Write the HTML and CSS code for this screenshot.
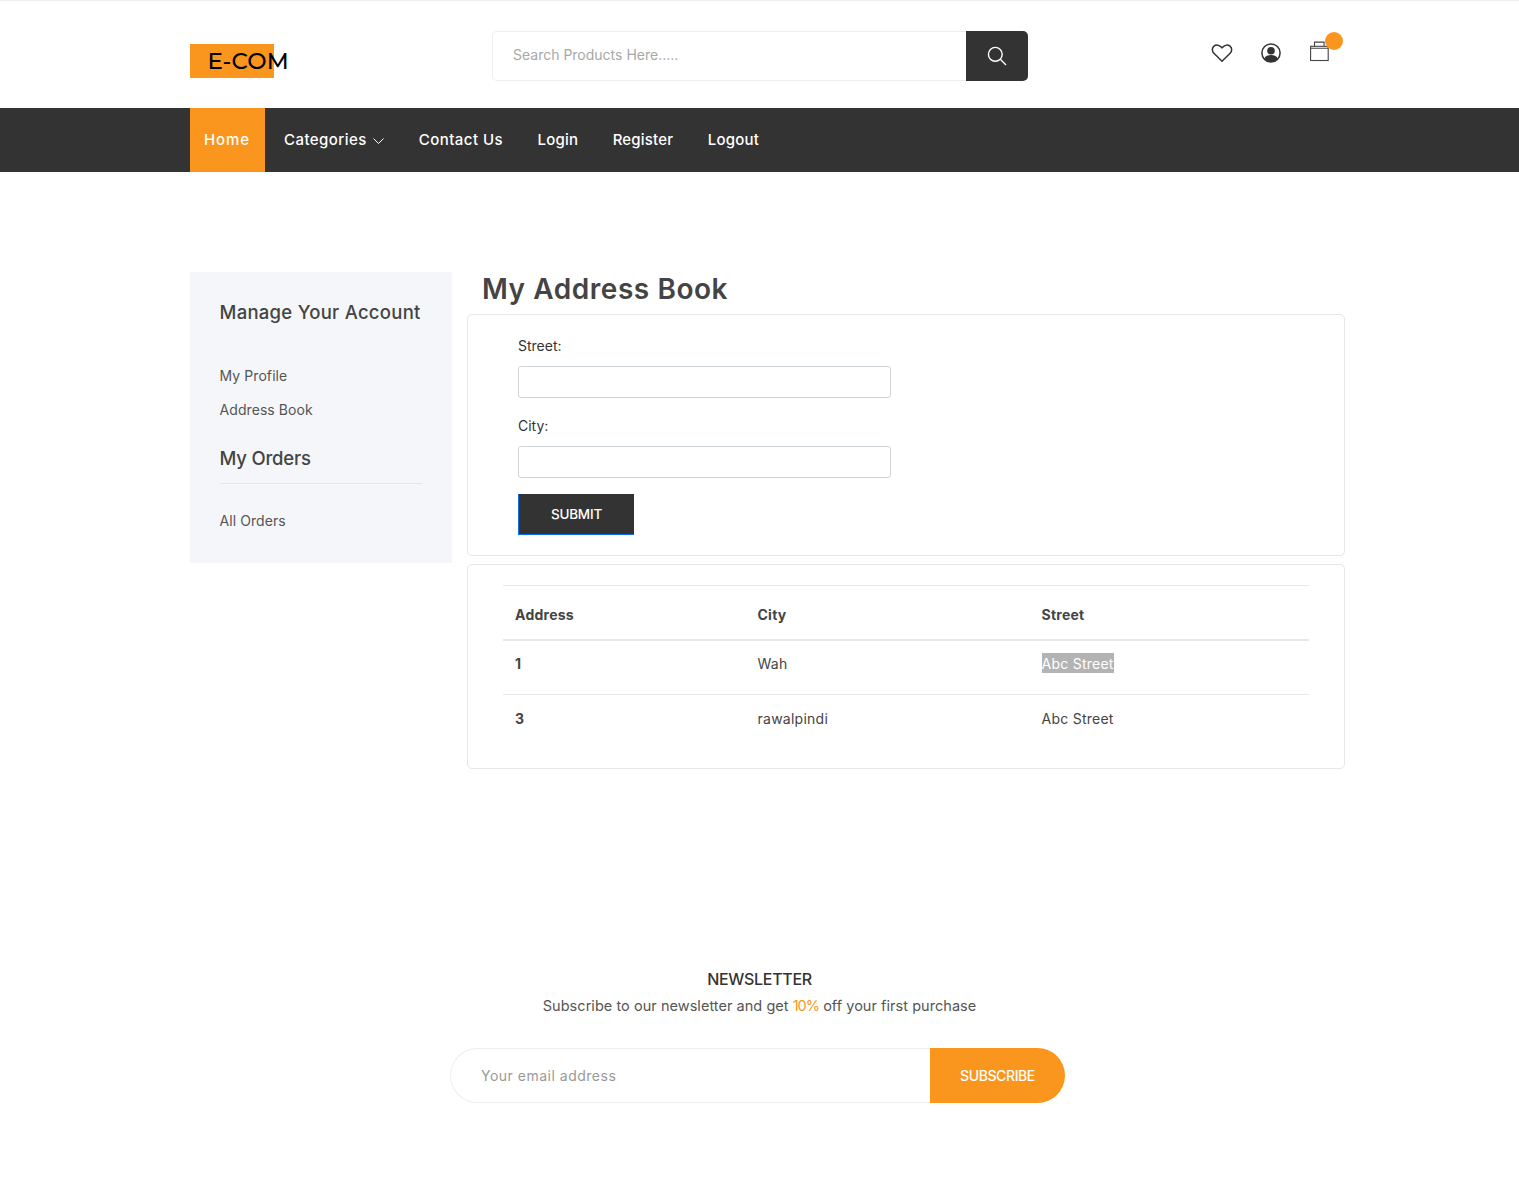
FILE: index.html
```html
<!DOCTYPE html>
<html lang="en">
<head>
<meta charset="utf-8">
<title>My Address Book</title>
<link rel="stylesheet" href="styles.css">
</head>
<body>
<header class="header">
  <div class="logo"><span class="logo-mark">E-COM</span></div>
  <form class="search">
    <div class="search-field">Search Products Here.....</div>
    <button type="button" class="search-btn" aria-label="Search">
      <svg width="20" height="20" viewBox="0 0 20 20" fill="none" stroke="#fff" stroke-width="1.4"><circle cx="8.3" cy="8.3" r="6.9"/><path d="M13.3 13.3l5.700 5.700"/></svg>
    </button>
  </form>
  <div class="header-icons">
    <svg class="icon icon-low" width="22" height="20" viewBox="0 0 22 20" fill="none" stroke="#333" stroke-width="1.5"><path d="M11 18.2 2.900 10.300C.7 8.100.9 4.900 3 3.100 5.100 1.400 8.400 1.700 11 4.800 13.600 1.700 16.900 1.400 19 3.100 21.100 4.900 21.300 8.100 19.100 10.300Z"/></svg>
    <svg class="icon icon-low" width="20" height="20" viewBox="0 0 20 20"><circle cx="10" cy="10" r="9.100" fill="none" stroke="#333" stroke-width="1.500"/><circle cx="10" cy="7.800" r="3.800" fill="#333"/><path d="M3.300 15.500C4.500 12.800 7 12 10 12s5.500.8 6.700 3.500A9 9 0 0 1 10 19a9 9 0 0 1-6.700-3.500Z" fill="#333"/></svg>
    <div class="cart">
      <svg class="icon" width="19" height="21" viewBox="0 0 19 21" fill="none" stroke="#444" stroke-width="1.100"><rect x=".6" y="5.300" width="17.600" height="14.200"/><path d="M.6 7.300h17.600M4.500 5.300V1.100h9.600v4.200"/></svg>
      <span class="cart-badge"></span>
    </div>
  </div>
</header>
<nav class="nav">
  <a class="nav-link nav-active">Home</a>
  <a class="nav-link">Categories
    <svg class="chev" width="11" height="6" viewBox="0 0 11 6" fill="none" stroke="#fff" stroke-width="1"><path d="M.5.500l5 5 5-5"/></svg>
  </a>
  <a class="nav-link">Contact Us</a>
  <a class="nav-link nav-tight">Login</a>
  <a class="nav-link nav-tight">Register</a>
  <a class="nav-link nav-tight">Logout</a>
</nav>
<main class="main">
  <aside class="side">
    <h3 class="side-title">Manage Your Account</h3>
    <ul class="side-list">
      <li>My Profile</li>
      <li>Address Book</li>
    </ul>
    <h3 class="side-sub">My Orders</h3>
    <ul class="side-list side-list-last">
      <li>All Orders</li>
    </ul>
  </aside>
  <section class="content">
    <h2 class="page-title">My Address Book</h2>
    <div class="card form-card">
      <label class="label">Street:</label>
      <div class="input"></div>
      <label class="label">City:</label>
      <div class="input"></div>
      <button type="button" class="submit">SUBMIT</button>
    </div>
    <div class="card table-card">
      <table class="table">
        <thead>
          <tr><th class="c1">Address</th><th class="c2">City</th><th>Street</th></tr>
        </thead>
        <tbody>
          <tr><td class="strong">1</td><td>Wah</td><td><span class="selected">Abc Street</span></td></tr>
          <tr><td class="strong">3</td><td>rawalpindi</td><td>Abc Street</td></tr>
        </tbody>
      </table>
    </div>
  </section>
</main>
<section class="news">
  <h4 class="news-title">NEWSLETTER</h4>
  <p class="news-text">Subscribe to our newsletter and get <span class="accent">10%</span> off your first purchase</p>
  <form class="sub">
    <div class="sub-field">Your email address</div>
    <button type="button" class="sub-btn">SUBSCRIBE</button>
  </form>
</section>
</body>
</html>
```
FILE: styles.css
```css
* { box-sizing: border-box; }
html, body { margin: 0; padding: 0; }
body {
  font-family: Inter, "Open Sans", sans-serif;
  color: #333;
  background: #fff;
  border-top: 1px solid #eee;
  height: 1203px;
}
.header {
  height: 107px;
  padding: 0 174px 0 190px;
  display: flex;
}
.logo { width: 302px; padding-top: 43px; }
.logo-mark {
  display: block;
  width: 84px;
  height: 34px;
  background: #fa961e;
  padding-left: 17.500px;
  font-family: Montserrat, Inter, sans-serif;
  font-size: 23px;
  font-weight: 500;
  line-height: 34px;
  letter-spacing: .1px;
  color: #000;
  white-space: nowrap;
}
.search { display: flex; width: 536px; height: 50px; margin-top: 30px; }
.search-field {
  flex: 1;
  border: 1px solid #eee;
  border-right: 0;
  border-radius: 5px 0 0 5px;
  padding-left: 20px;
  line-height: 45px;
  font-size: 14px;
  color: #a8a8a8;
}
.search-btn {
  width: 62px;
  border: 0;
  background: #333;
  border-radius: 0 5px 5px 0;
  padding: 0;
  display: flex;
  align-items: center;
  justify-content: center;
}
.header-icons {
  margin-left: auto;
  display: flex;
  gap: 28.5px;
  padding-top: 40px;
  padding-right: 16.500px;
  align-items: flex-start;
}
.icon { display: block; }
.icon-low { margin-top: 2px; }
.cart { position: relative; width: 19px; }
.cart-badge {
  position: absolute;
  left: 15px;
  top: -9px;
  width: 18px;
  height: 18px;
  border-radius: 50%;
  background: #fa961e;
}
.nav {
  height: 64px;
  background: #333;
  padding-left: 190px;
  display: flex;
  align-items: stretch;
}
.nav-link {
  color: #fff;
  font-size: 15px;
  font-weight: 500;
  line-height: 64px;
  margin-right: 34.500px;
  letter-spacing: .45px;
  white-space: nowrap;
}
.nav-tight { letter-spacing: .2px; }
.nav-active {
  background: #fa961e;
  padding: 0 15px 0 14px;
  width: 75px;
  margin-right: 19px;
  letter-spacing: .9px;
}
.chev { margin-left: 2px; vertical-align: 1px; }
.main {
  display: flex;
  gap: 15px;
  padding: 100px 174px 0 190px;
  align-items: flex-start;
}
.side {
  width: 262px;
  height: 291px;
  background: #f5f6fa;
  padding: 28px 30px 0 29.500px;
  color: #444;
}
.side-title {
  margin: 0;
  font-size: 18.500px;
  font-weight: 500;
  line-height: 25px;
  letter-spacing: .27px;
}
.side-list {
  list-style: none;
  margin: 34px 0 0;
  padding: 0;
  font-size: 14px;
  line-height: 34px;
  letter-spacing: .08px;
  color: #555;
}
.side-sub {
  margin: 18px 0 0;
  padding-bottom: 12px;
  border-bottom: 1px solid #e6e6e6;
  font-size: 18.500px;
  font-weight: 500;
  line-height: 26px;
  letter-spacing: -.2px;
}
.side-list-last { margin-top: 20px; }
.content { flex: 1; }
.page-title {
  margin: 0 0 0 15px;
  height: 42px;
  font-size: 28px;
  font-weight: 600;
  line-height: 35px;
  letter-spacing: .55px;
  color: #444;
}
.card { border: 1px solid #e6e6e6; border-radius: 5px; }
.form-card { height: 242px; padding: 19px 50px 0; }
.table-card { height: 205px; margin-top: 8px; padding: 20px 35px 0; }
.label { display: block; font-size: 14px; line-height: 24px; color: #333; }
.input {
  width: 373px;
  height: 32px;
  margin: 8px 0 16px;
  border: 1px solid #ced4da;
  border-radius: 3px;
}
.submit {
  display: block;
  width: 116px;
  height: 41px;
  background: #333;
  color: #fff;
  border: 0;
  border-left: 1px solid #0a6fe8;
  border-bottom: 1px solid #0a6fe8;
  font-family: inherit;
  font-size: 13.500px;
  font-weight: 500;
  letter-spacing: -.2px;
}
.table { width: 100%; border-collapse: collapse; font-size: 14px; letter-spacing: .25px; color: #444; }
.table th, .table td { text-align: left; padding: 0 12px; }
.table th { height: 54px; padding-top: 5px; font-weight: 700; border-top: 1px solid #e8e8e8; border-bottom: 2px solid #e8e8ec; }
.table td { height: 55px; padding-bottom: 8px; border-bottom: 1px solid #e8e8ec; }
.table tbody tr:last-child td { border-bottom: 0; }
.c1 { width: 242.500px; }
.c2 { width: 284px; }
.strong { font-weight: 700; }
.selected { background: #b3b3b3; color: #fff; padding: 2px 0 1px; }
.news { text-align: center; padding-top: 198px; }
.news-title { margin: 0; font-size: 16px; font-weight: 500; line-height: 24px; letter-spacing: -.3px; color: #333; }
.news-text { margin: 3px 0 0; font-size: 14.500px; line-height: 24px; letter-spacing: .04px; color: #555; }
.accent { color: #fa961e; letter-spacing: -1px; }
.sub { display: flex; width: 615px; height: 55px; margin: 30px 0 0 450px; }
.sub-field {
  flex: 1;
  border: 1px solid #eee;
  border-right: 0;
  border-radius: 28px 0 0 28px;
  padding-left: 30px;
  text-align: left;
  line-height: 54px;
  font-size: 14px;
  letter-spacing: .5px;
  color: #999;
}
.sub-btn {
  width: 135px;
  border: 0;
  background: #fa961e;
  color: #fff;
  border-radius: 0 28px 28px 0;
  font-family: inherit;
  font-size: 14px;
  font-weight: 500;
  letter-spacing: -.4px;
}
```
